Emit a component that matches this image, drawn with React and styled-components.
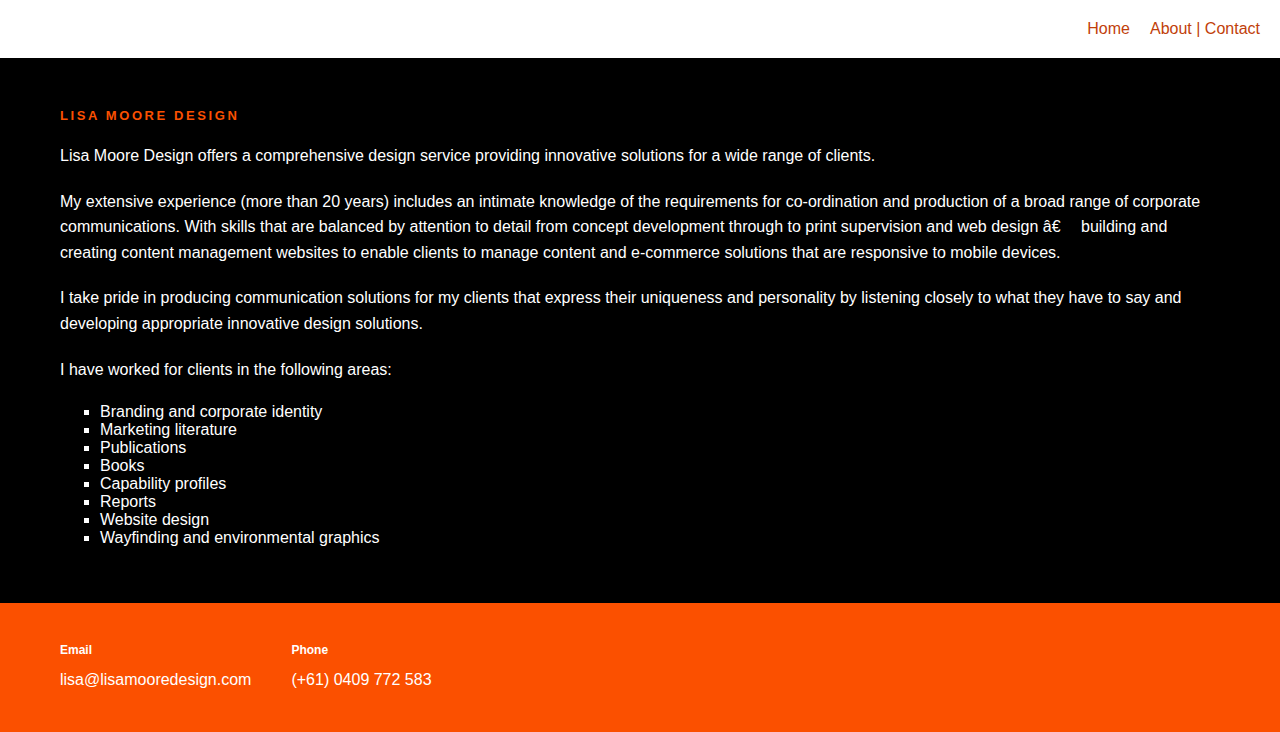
import React from "react";
import styled, { createGlobalStyle } from "styled-components";

const GlobalStyle = createGlobalStyle`
  html, body {
    margin: 0;
    padding: 0;
    background: #000;
  }
  body {
    font-family: "Liberation Sans", Arial, Helvetica, sans-serif;
    -webkit-font-smoothing: antialiased;
  }
`;

const Header = styled.header`
  height: 58px;
  background: #fff;
  display: flex;
  justify-content: flex-end;
  align-items: center;
  padding: 0 20px;
  box-sizing: border-box;
`;

const Nav = styled.nav`
  display: flex;
  gap: 20px;
`;

const NavLink = styled.a`
  color: #c13f0b;
  font-size: 16px;
  text-decoration: none;
  line-height: 1;
`;

const Main = styled.main`
  background: #000;
  color: #fff;
  padding: 50px 60px 56px;
`;

const Heading = styled.h1`
  margin: 0 0 20px;
  font-size: 13px;
  font-weight: bold;
  letter-spacing: 2.6px;
  line-height: 15px;
  color: #fb5000;
  text-transform: uppercase;
`;

const Para = styled.p`
  margin: 0 0 20px;
  font-size: 16px;
  line-height: 1.6;
  max-width: 1160px;
`;

const List = styled.ul`
  margin: 0;
  padding: 1px 0 0 40px;
  list-style: square;
  font-size: 16px;
  line-height: 18px;
`;

const Footer = styled.footer`
  background: #fb5000;
  color: #fff;
  padding: 40px 60px;
  display: flex;
  gap: 40px;
`;

const Contact = styled.div`
  display: flex;
  flex-direction: column;
`;

const Label = styled.span`
  font-size: 12px;
  font-weight: bold;
  line-height: 14px;
  margin-bottom: 10px;
`;

const Value = styled.span`
  font-size: 16px;
  line-height: 25.6px;
`;

const areas = [
  "Branding and corporate identity",
  "Marketing literature",
  "Publications",
  "Books",
  "Capability profiles",
  "Reports",
  "Website design",
  "Wayfinding and environmental graphics",
];

export default function App() {
  return (
    <>
      <GlobalStyle />
      <Header>
        <Nav>
          <NavLink href="#">Home</NavLink>
          <NavLink href="#">About | Contact</NavLink>
        </Nav>
      </Header>
      <Main>
        <Heading>Lisa Moore Design</Heading>
        <Para>
          Lisa Moore Design offers a comprehensive design service providing
          innovative solutions for a wide range of clients.
        </Para>
        <Para>
          My extensive experience (more than 20 years) includes an intimate
          knowledge of the requirements for co-ordination and production of a
          broad range of corporate communications. With skills that are
          balanced by attention to detail from concept development through to
          print supervision and web design {"â€\u2003 building"} and creating
          content management websites to enable clients to manage content and
          e-commerce solutions that are responsive to mobile devices.
        </Para>
        <Para>
          I take pride in producing communication solutions for my clients that
          express their uniqueness and personality by listening closely to what
          they have to say and developing appropriate innovative design
          solutions.
        </Para>
        <Para>I have worked for clients in the following areas:</Para>
        <List>
          {areas.map((a) => (
            <li key={a}>{a}</li>
          ))}
        </List>
      </Main>
      <Footer>
        <Contact>
          <Label>Email</Label>
          <Value>lisa@lisamooredesign.com</Value>
        </Contact>
        <Contact>
          <Label>Phone</Label>
          <Value>(+61) 0409 772 583</Value>
        </Contact>
      </Footer>
    </>
  );
}
